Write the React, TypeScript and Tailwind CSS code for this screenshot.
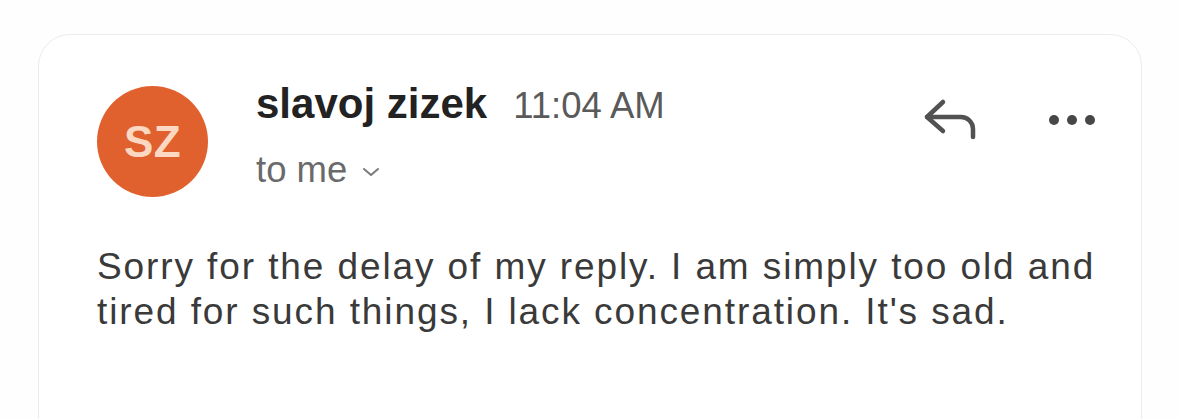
export default function App() {
  return (
    <div className="w-[1179px] h-[419px] overflow-hidden bg-[#fefefe] pt-[34px] pl-[38px]" style={{ fontFamily: '"Liberation Sans", Arial, Helvetica, sans-serif' }}>
      <div className="w-[1104px] h-[460px] rounded-[32px] border border-[#ececf0] bg-white pt-[45px] pl-[58px] pr-[44px]">
        <div className="flex items-start">
          <div className="mt-[6px] w-[111px] h-[111px] rounded-full bg-[#e1612e] flex items-center justify-center shrink-0">
            <span className="text-[44px] font-bold text-[#fcd8c2] leading-none tracking-[0.5px]">SZ</span>
          </div>
          <div className="ml-[48px] flex flex-col">
            <div className="flex items-baseline h-[48px] leading-[48px]">
              <span className="text-[42px] font-bold text-[#222222]">slavoj zizek</span>
              <span className="ml-[26px] text-[36.5px] text-[#5a5a5a]">11:04 AM</span>
            </div>
            <div className="mt-[22px] flex items-center h-[40px] leading-[40px]">
              <span className="text-[36.5px] text-[#6a6a6a]">to me</span>
              <svg className="ml-[13px] mt-[4px]" width="22" height="12" viewBox="0 0 22 12">
                <path d="M4 3 L11 9 L18 3" fill="none" stroke="#7a7a7a" strokeWidth="2" strokeLinecap="round" strokeLinejoin="round" />
              </svg>
            </div>
          </div>
          <div className="ml-auto flex items-start">
            <svg className="mt-[18px]" width="56" height="44" viewBox="0 0 56 44">
              <path d="M22 4 L6 19 L22 33" fill="none" stroke="#525252" strokeWidth="4.5" strokeLinecap="round" strokeLinejoin="round" />
              <path d="M6 19 H40 A12 12 0 0 1 52 31 V39" fill="none" stroke="#525252" strokeWidth="4.5" strokeLinecap="round" strokeLinejoin="round" />
            </svg>
            <svg className="ml-[70px] mt-[33px]" width="50" height="14" viewBox="0 0 50 14">
              <circle cx="7" cy="7" r="5" fill="#474747" />
              <circle cx="25" cy="7" r="5" fill="#474747" />
              <circle cx="43" cy="7" r="5" fill="#474747" />
            </svg>
          </div>
        </div>
        <p className="mt-[47px] text-[37px] leading-[45px] tracking-[1.9px] text-[#3a3a3a] whitespace-nowrap">
          Sorry for the delay of my reply. I am simply too old and
          <br />
          tired for such things, I lack concentration. It's sad.
        </p>
      </div>
    </div>
  );
}
